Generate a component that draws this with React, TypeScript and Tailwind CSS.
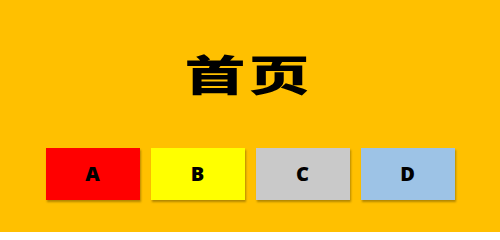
import React from 'react';

const boxes = [
    { label: 'A', color: 'bg-[#ff0000]' },
    { label: 'B', color: 'bg-[#ffff00]' },
    { label: 'C', color: 'bg-[#c9c9c9]' },
    { label: 'D', color: 'bg-[#9dc3e6]' },
];

const App: React.FC = () => {
    return (
        <div className="w-[500px] h-[232px] bg-[#ffc000] flex flex-col items-center">
            <h1
                className="mt-[49px] h-[48px] pr-[6px] flex items-center gap-[21px] text-[42px] font-black text-black leading-none"
                style={{ fontFamily: '"Noto Sans CJK SC", sans-serif' }}
            >
                <span className="inline-block scale-x-[1.45]">首</span>
                <span className="inline-block scale-x-[1.45]">页</span>
            </h1>
            <div className="mt-[51px] flex gap-[11px]">
                {boxes.map(b => (
                    <div
                        key={b.label}
                        className={`w-[94px] h-[52px] ${b.color} flex items-center justify-center shadow-[1px_2px_2px_rgba(0,0,0,0.3)] text-[20px] font-black text-black`}
                        style={{ fontFamily: '"Noto Sans", sans-serif' }}
                    >
                        {b.label}
                    </div>
                ))}
            </div>
        </div>
    );
};

export default App;
